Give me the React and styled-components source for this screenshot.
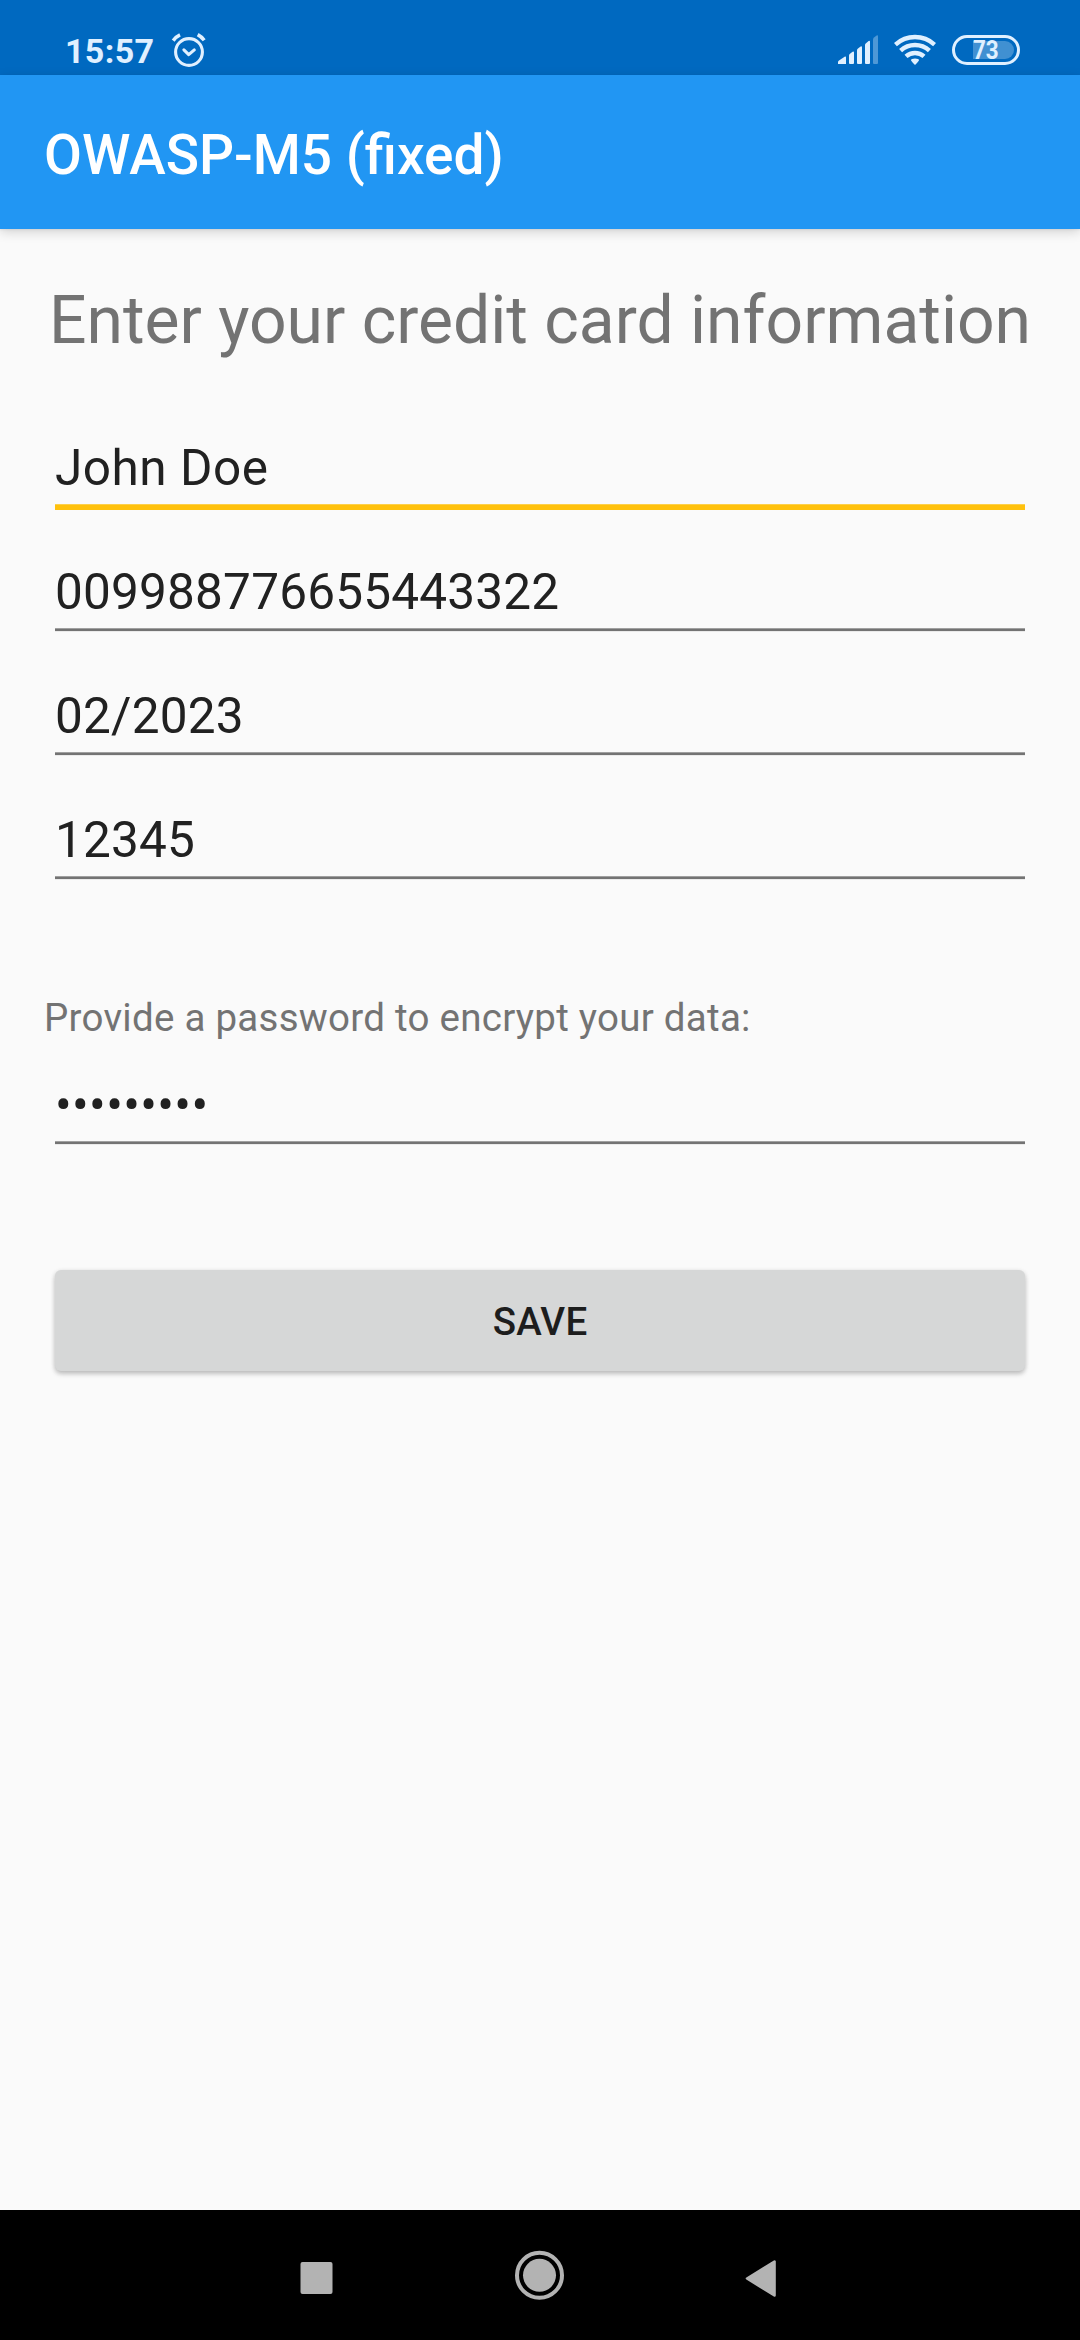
import React from "react";
import styled, { createGlobalStyle } from "styled-components";

const GlobalStyle = createGlobalStyle`
  *, *::before, *::after { box-sizing: border-box; }
  html, body { margin: 0; padding: 0; background: #fafafa; }
  body { font-family: Roboto, "Noto Sans", sans-serif; }
`;

const Screen = styled.div`
  display: flex;
  flex-direction: column;
  width: 1080px;
  height: 2340px;
  overflow: hidden;
  background: #fafafa;
`;

const StatusBar = styled.header`
  display: flex;
  justify-content: space-between;
  flex: none;
  height: 75px;
  padding: 0 60px 0 65px;
  background: #0069c0;
  color: #e0f0ff;
`;

const StatusGroup = styled.div`
  display: flex;
  align-items: flex-end;
  padding-bottom: ${(p) => p.$bottom}px;
  gap: ${(p) => p.$gap}px;

  svg { display: block; flex: none; }
`;

const Clock = styled.time`
  padding-bottom: 1px;
  font-size: 34px;
  font-weight: 700;
  line-height: 32px;
  letter-spacing: 0.35px;
`;

const AppBar = styled.div`
  flex: none;
  height: 154px;
  padding: 6px 44px 0;
  background: #2196f3;
  box-shadow: 0 3px 11px rgba(0, 0, 0, 0.16), 0 1px 2px rgba(0, 0, 0, 0.06);
`;

const AppTitle = styled.h1`
  margin: 0;
  color: #fff;
  font-size: 55px;
  font-weight: 500;
  line-height: 148px;
  white-space: nowrap;
`;

const Form = styled.main`
  display: flex;
  flex-direction: column;
  flex: 1;
  padding: 28px 44px 0;
`;

const Heading = styled.h2`
  margin: 0;
  color: #737373;
  font-size: 66px;
  font-weight: 400;
  line-height: 127px;
  text-align: center;
  white-space: nowrap;
`;

const Field = styled.div`
  display: flex;
  flex-direction: column;
  justify-content: flex-end;
  height: ${(p) => p.$height}px;
  margin: 0 11px;
`;

const FieldValue = styled.span`
  color: #212121;
  font-size: 49.5px;
  line-height: 72px;
  letter-spacing: ${(p) => p.$tracking}px;
  white-space: nowrap;
`;

const Underline = styled.span`
  flex: none;
  height: ${(p) => (p.$active ? 6 : 4)}px;
  margin-bottom: ${(p) => (p.$active ? -2 : 0)}px;
  background: ${(p) =>
    p.$active
      ? "linear-gradient(#fdd04a 1px, #ffc10d 1px)"
      : "linear-gradient(#a0a0a0 1px, #737373 1px, #737373 3px, #eaeaea 3px)"};
`;

const Label = styled.p`
  margin: 112px 0 0;
  color: #737373;
  font-size: 38.5px;
  line-height: 52px;
  letter-spacing: 0.265px;
  white-space: nowrap;
`;

const SaveButton = styled.button`
  height: 101px;
  margin: 125px 11px 0;
  padding: 4px 0 0;
  border: 0;
  border-radius: 6px;
  background: #d6d7d7;
  box-shadow: 0 3px 5px rgba(0, 0, 0, 0.2), 0 1px 5px rgba(0, 0, 0, 0.1);
  color: #1d1d1d;
  font: 500 38.5px/1 Roboto, sans-serif;
  letter-spacing: 0.2px;
`;

const NavBar = styled.nav`
  display: flex;
  align-items: center;
  justify-content: center;
  flex: none;
  height: 130px;
  gap: 167px;
  background: #000;
`;

const NavButton = styled.span`
  display: flex;
  width: 56px;
  height: 56px;

  svg { display: block; }
`;

const AlarmIcon = () => (
  <svg width="36" height="36" viewBox="0 0 36 36" fill="none" stroke="currentColor" strokeLinecap="round">
    <circle cx="18" cy="20" r="13.4" strokeWidth="3.1" />
    <path d="M12.9 17.9 L17.7 22.6 L23.3 17.9" strokeWidth="3.1" strokeLinejoin="round" />
    <path d="M2.2 8.6 Q5.2 4.6 9 2.9 M33.2 8.2 Q30.6 4.7 26.7 2.6" strokeWidth="3.6" strokeLinecap="butt" />
  </svg>
);

const SignalIcon = () => (
  <svg width="40" height="30" viewBox="0 0 40 30" fill="currentColor">
    <path d="M0 29 V27 Q0 26 1 25.4 L7 21.6 Q8 21.2 8 22.4 V29 H0Z" />
    <path d="M11 29 V20.5 Q11 19.5 12 18.7 L14.6 16.7 Q16 16 16 17.5 V28 Q16 29 15 29 H12 Q11 29 11 28Z" />
    <path d="M19 28 V15.3 Q19 14.3 20 13.5 L22.6 11.5 Q24 10.9 24 12.3 V28 Q24 29 23 29 H20 Q19 29 19 28Z" />
    <path d="M27 28 V10 Q27 9 28 8.2 L30.6 6 Q32 5.3 32 6.8 V28 Q32 29 31 29 H28 Q27 29 27 28Z" />
    <path opacity="0.35" d="M35 28 V4.5 Q35 3.3 36 2.4 L38.6 .4 Q40 -.2 40 1.3 V28 Q40 29 39 29 H36 Q35 29 35 28Z" />
  </svg>
);

const WifiIcon = () => (
  <svg width="42" height="31" viewBox="0 0 42 31" fill="none" stroke="currentColor" strokeWidth="4.4">
    <path d="M1.4 10.6 A29 29 0 0 1 40.6 10.6" />
    <path d="M6.6 16.6 A21.2 21.2 0 0 1 35.4 16.6" />
    <path d="M12 22.4 A13.4 13.4 0 0 1 30 22.4" />
    <path d="M21 24.6 Q25 24.6 25 26.2 Q25 27 21 31 Q17 27 17 26.2 Q17 24.6 21 24.6Z" fill="currentColor" stroke="none" />
  </svg>
);

const BatteryShell = styled.span`
  display: flex;
  align-items: center;
  width: 68px;
  height: 30px;
  padding-left: 18px;
  border: 3px solid currentColor;
  border-radius: 15px;
`;

const BatteryLevel = styled.span`
  display: flex;
  width: 41px;
  height: 18px;
  border-radius: 0 9px 9px 0;
  background: #4090d2;
`;

const BatteryText = styled.span`
  font-size: 25.5px;
  font-weight: 700;
  line-height: 19px;
  transform: scaleX(0.88);
  transform-origin: left center;
`;

const fields = [
  { name: "holder", value: "John Doe", active: true, tracking: 0.5 },
  { name: "number", value: "009988776655443322" },
  { name: "expiry", value: "02/2023" },
  { name: "code", value: "12345" },
];

function TextField({ value, active = false, height = 124, tracking = 0.2 }) {
  return (
    <Field $height={height}>
      <FieldValue $tracking={tracking}>{value}</FieldValue>
      <Underline $active={active} />
    </Field>
  );
}

export default function App() {
  return (
    <>
      <GlobalStyle />
      <Screen>
        <StatusBar>
          <StatusGroup $gap={17} $bottom={7}>
            <Clock>15:57</Clock>
            <AlarmIcon />
          </StatusGroup>
          <StatusGroup $gap={16} $bottom={10}>
            <SignalIcon />
            <WifiIcon />
            <BatteryShell>
              <BatteryLevel>
                <BatteryText>73</BatteryText>
              </BatteryLevel>
            </BatteryShell>
          </StatusGroup>
        </StatusBar>
        <AppBar>
          <AppTitle>OWASP-M5 (fixed)</AppTitle>
        </AppBar>
        <Form>
          <Heading>Enter your credit card information</Heading>
          {fields.map((f) => (
            <TextField key={f.name} value={f.value} active={f.active} tracking={f.tracking} />
          ))}
          <Label>Provide a password to encrypt your data:</Label>
          <TextField value="•••••••••" height={101} tracking={0.35} />
          <SaveButton>SAVE</SaveButton>
        </Form>
        <NavBar>
          <NavButton>
            <svg width="56" height="56" viewBox="0 0 56 56">
              <rect x="11.5" y="15" width="32" height="32" rx="2" fill="#b3b3b3" />
            </svg>
          </NavButton>
          <NavButton>
            <svg width="56" height="56" viewBox="0 0 56 56">
              <circle cx="27.5" cy="28.3" r="22.5" fill="none" stroke="#b3b3b3" strokeWidth="4" />
              <circle cx="27.5" cy="28.3" r="16.5" fill="#b3b3b3" />
            </svg>
          </NavButton>
          <NavButton>
            <svg width="56" height="56" viewBox="0 0 56 56">
              <path d="M12 31.5 L39.5 14.5 V48.5Z" fill="#b3b3b3" stroke="#b3b3b3" strokeWidth="2.6" strokeLinejoin="round" />
            </svg>
          </NavButton>
        </NavBar>
      </Screen>
    </>
  );
}
